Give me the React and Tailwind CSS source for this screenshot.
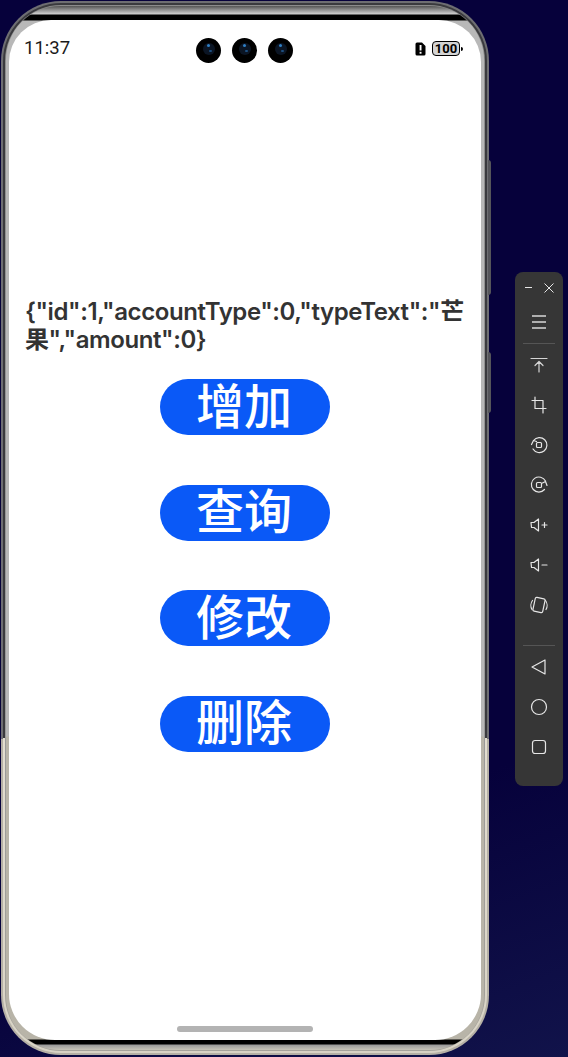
const FONT = "font-['Inter','Noto_Sans_CJK_SC',sans-serif]";

const ACTIONS = ['增加', '查询', '修改', '删除'];

const Camera = () => (
  <div className="relative h-[25px] w-[25px] rounded-full bg-black">
    <div className="absolute left-[7px] top-[5px] h-[12px] w-[12px] rounded-full bg-[#0b1524]" />
    <div className="absolute left-[11px] top-[6px] h-[3px] w-[3px] rounded-full bg-[#2f7fc4]" />
    <div className="absolute left-[13px] top-[12px] h-[2px] w-[3px] rounded-full bg-[#1d4f80]" />
  </div>
);

const StatusBar = () => (
  <div className="relative flex h-[40px] items-start justify-between pl-[15px] pr-[18px] pt-[16px]">
    <span className="font-['Roboto',sans-serif] text-[18.5px] leading-[24px] text-[#1a1a1a]">11:37</span>
    <div className="absolute left-[187px] top-[18px] flex gap-[11px]">
      <Camera />
      <Camera />
      <Camera />
    </div>
    <div className="flex items-center pt-[5px]">
      <svg width="11" height="14" viewBox="0 0 11 14" className="mr-[6px]">
        <path d="M2 0.5h5l3.5 3.5v8a1.5 1.5 0 0 1-1.5 1.5H2A1.5 1.5 0 0 1 .5 12V2A1.5 1.5 0 0 1 2 .5z" fill="#000" />
        <rect x="4.6" y="3" width="1.9" height="5.5" fill="#fff" />
        <rect x="4.6" y="9.8" width="1.9" height="1.9" fill="#fff" />
      </svg>
      <div className="flex h-[15px] w-[28px] items-center justify-center rounded-[4px] border border-black bg-[#d4d4d4] font-['Roboto',sans-serif] text-[13px] font-bold leading-none text-black">
        100
      </div>
      <div className="ml-[1px] h-[4px] w-[2px] rounded-r-sm bg-black" />
    </div>
  </div>
);

const Screen = () => (
  <div className="relative h-[1020px] w-[472px] overflow-hidden rounded-t-[42px] rounded-b-[46px] bg-white">
    <StatusBar />
    <p className={`${FONT} mt-[238px] w-[456px] pl-[16px] text-[24px] font-semibold leading-[28px] tracking-[-0.42px] text-[#333333]`}>
      {'{"id":1,"accountType":0,"typeText":"芒果","amount":0}'}
    </p>
    <div className="mt-[25px] flex flex-col items-center gap-[49.6px]">
      {ACTIONS.map((label) => (
        <button
          key={label}
          className="flex h-[56px] w-[170px] items-center justify-center rounded-full bg-[#0a59f7] pb-[9px] pr-[2px] font-['Noto_Sans_CJK_SC',sans-serif] text-[48px] font-medium leading-none text-white"
        >
          {label}
        </button>
      ))}
    </div>
    <div className="absolute bottom-[8px] left-[168px] h-[6px] w-[136px] rounded-full bg-[#b3b3b3]" />
  </div>
);

const Phone = () => (
  <div className="relative ml-px mt-px h-[1054px] w-[488px] shrink-0">
    <div className="absolute -right-[2px] top-[159px] h-[135px] w-[3px] rounded-r-sm bg-[#55555a]" />
    <div className="absolute -right-[2px] top-[351px] h-[61px] w-[3px] rounded-r-sm bg-[#55555a]" />
    <div className="h-full rounded-[60px] bg-[linear-gradient(to_bottom,#6e6e72_0%,#6e6e72_70%,#b5b0a5_70%,#b5b0a5_100%)] p-[2px]">
      <div className="h-full rounded-[58px] bg-[linear-gradient(to_bottom,#3a3a3e_0%,#3a3a3e_70%,#e2ddd0_70%,#d8d3c5_100%)] p-[2px]">
        <div className="h-full rounded-[56px] bg-[linear-gradient(to_bottom,#8c8c8c_0%,#9a9a9a_70%,#a6a39b_100%)] p-[1px]">
          <div className="h-full rounded-[54px] bg-[linear-gradient(to_bottom,#555_0px,#d0d0d0_8px,#000_9px,#000_14px,#b8b8b8_15px,#b8b8b8_730px,#b8b4a8_731px,#b8b4a8_1033px,#000_1034px,#000_1038px,#9a9a9a_1039px,#c8c4b8_1044px)] px-[3px] pt-[14px]">
            <Screen />
          </div>
        </div>
      </div>
    </div>
  </div>
);

const Icon = ({ children }) => (
  <svg width="20" height="20" viewBox="0 0 20 20" fill="none" stroke="#e6e6e6" strokeWidth="1.2" strokeLinecap="round" strokeLinejoin="round">
    {children}
  </svg>
);

const ToolButton = ({ children }) => (
  <div className="flex h-[40px] items-center justify-center">
    <Icon>{children}</Icon>
  </div>
);

const Toolbar = () => (
  <div className="ml-[26px] mt-[272px] flex h-[514px] w-[48px] shrink-0 flex-col rounded-[8px] bg-[#363636]">
    <div className="flex h-[30px] items-center justify-between px-[9px] pt-[1px]">
      <div className="ml-[1px] h-[1.5px] w-[7px] bg-[#e6e6e6]" />
      <svg width="10" height="10" viewBox="0 0 10 10" stroke="#e6e6e6" strokeWidth="1">
        <path d="M.5.5l9 9M9.5.5l-9 9" />
      </svg>
    </div>
    <div className="flex h-[41px] items-center justify-center pb-[1px]">
      <svg width="16" height="14" viewBox="0 0 16 14" stroke="#d8d8d8" strokeWidth="1.5">
        <path d="M1 1h14M1 7h14M1 13h14" />
      </svg>
    </div>
    <div className="mx-[8px] h-px bg-[#555555]" />
    <div className="mt-[1px] flex flex-col">
      <ToolButton>
        <path d="M2 3.5h16M10 17V7M6 10.5L10 6.5l4 4" stroke="#d5d5d5" />
      </ToolButton>
      <ToolButton>
        <path d="M6 2v11.5h11M3 5.5h11V18" />
      </ToolButton>
      <ToolButton>
        <path d="M4.500 5.500A7.500 7.500 0 1 1 4 14" />
        <path d="M2.500 9.500l2-4 3 1" />
        <rect x="7.500" y="7.500" width="5" height="5" rx="1" />
      </ToolButton>
      <ToolButton>
        <path d="M15.500 14.500A7.500 7.500 0 1 1 16.500 6" />
        <path d="M18 10.500l-1.500-4-3 1.500" />
        <rect x="7.500" y="7.500" width="5" height="5" rx="1" />
      </ToolButton>
      <ToolButton>
        <path d="M2 7.500h3l4.500-3.500v12L5 12.500H2.500z" />
        <path d="M13 10h5M15.500 7.500v5" />
      </ToolButton>
      <ToolButton>
        <path d="M2 7.500h3l4.500-3.500v12L5 12.500H2.500z" />
        <path d="M13 10h5" />
      </ToolButton>
      <ToolButton>
        <rect x="5" y="3" width="10" height="14" rx="1.500" transform="rotate(12 10 10)" />
        <path d="M3.500 5.500C1.500 8 1.500 12 3 14.500M16.500 5.500C18.500 8 18.500 12 17 14.500" />
      </ToolButton>
    </div>
    <div className="mx-[8px] mt-[20px] h-px bg-[#555555]" />
    <div className="mt-[1px] flex flex-col">
      <ToolButton>
        <path d="M16 3v14L3 10z" />
      </ToolButton>
      <ToolButton>
        <circle cx="10" cy="10" r="7.500" />
      </ToolButton>
      <ToolButton>
        <rect x="3.500" y="3.500" width="13" height="13" rx="2.500" />
      </ToolButton>
    </div>
  </div>
);

export default function App() {
  return (
    <div className="flex h-[1057px] w-[568px] items-start overflow-hidden bg-[linear-gradient(160deg,#06013b_0%,#06013b_75%,#11134a_100%)]">
      <Phone />
      <Toolbar />
    </div>
  );
}
